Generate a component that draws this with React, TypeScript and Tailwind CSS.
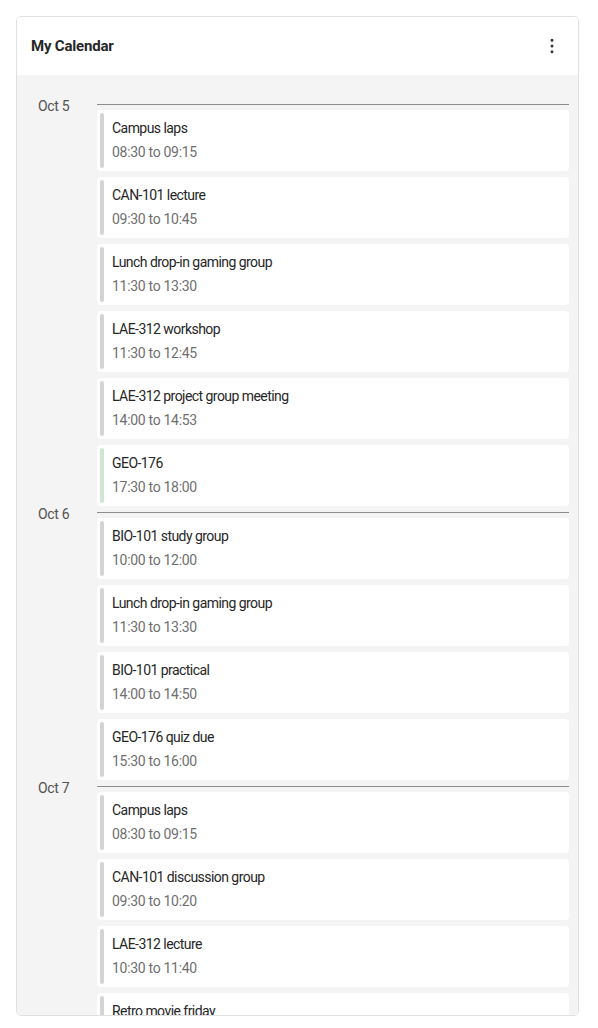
import React from 'react';
import { EllipsisVertical } from 'lucide-react';

interface CalendarEvent {
  title: string;
  time: string;
  accent?: string;
}

interface DayGroup {
  label: string;
  events: CalendarEvent[];
}

const days: DayGroup[] = [
  {
    label: 'Oct 5',
    events: [
      { title: 'Campus laps', time: '08:30 to 09:15' },
      { title: 'CAN-101 lecture', time: '09:30 to 10:45' },
      { title: 'Lunch drop-in gaming group', time: '11:30 to 13:30' },
      { title: 'LAE-312 workshop', time: '11:30 to 12:45' },
      { title: 'LAE-312 project group meeting', time: '14:00 to 14:53' },
      { title: 'GEO-176', time: '17:30 to 18:00', accent: 'green' },
    ],
  },
  {
    label: 'Oct 6',
    events: [
      { title: 'BIO-101 study group', time: '10:00 to 12:00' },
      { title: 'Lunch drop-in gaming group', time: '11:30 to 13:30' },
      { title: 'BIO-101 practical', time: '14:00 to 14:50' },
      { title: 'GEO-176 quiz due', time: '15:30 to 16:00' },
    ],
  },
  {
    label: 'Oct 7',
    events: [
      { title: 'Campus laps', time: '08:30 to 09:15' },
      { title: 'CAN-101 discussion group', time: '09:30 to 10:20' },
      { title: 'LAE-312 lecture', time: '10:30 to 11:40' },
      { title: 'Retro movie friday', time: '18:00 to 21:00' },
    ],
  },
];

const EventCard: React.FC<{ event: CalendarEvent }> = ({ event }) => (
  <div className="flex rounded-[4px] bg-white p-[3px] mb-[6px]">
    <div
      className={
        event.accent === 'green'
          ? 'w-[4px] rounded-[2px] bg-[#cfe6d4] shrink-0'
          : 'w-[4px] rounded-[2px] bg-[#d4d4d4] shrink-0'
      }
    />
    <div className="pl-[8px] pt-[5px] pb-[6px] flex flex-col gap-[4px]">
      <div className="text-[14px] leading-[20px] tracking-[-0.55px] text-[#262626]">{event.title}</div>
      <div className="text-[14px] leading-[20px] tracking-[-0.3px] text-[#6f6f6f]">{event.time}</div>
    </div>
  </div>
);

const App: React.FC = () => {
  return (
    <div className="pt-4 pl-4 bg-white" style={{ fontFamily: '"Roboto", "Liberation Sans", sans-serif' }}>
      <div className="w-[563px] h-[1000px] flex flex-col overflow-hidden rounded-[5px] border border-[#e0e0e0]">
        <div className="h-[58px] shrink-0 flex items-center justify-between bg-white pl-[14px] pr-[16px]">
          <h2 className="text-[15px] font-bold tracking-[-0.2px] text-[#262626]">My Calendar</h2>
          <EllipsisVertical size={20} className="text-[#333]" strokeWidth={1.6} />
        </div>
        <div className="flex-1 bg-[#f4f4f4] pt-[29px] pr-[9px]">
          {days.map((day) => (
            <div key={day.label} className="flex">
              <div className="w-[80px] shrink-0 pl-[21px]">
                <div className="-mt-[8px] text-[14px] leading-[20px] tracking-[-0.3px] text-[#525252]">{day.label}</div>
              </div>
              <div className="flex-1 border-t border-[#8d8d8d] pt-[5px]">
                {day.events.map((event, i) => (
                  <EventCard key={i} event={event} />
                ))}
              </div>
            </div>
          ))}
        </div>
      </div>
    </div>
  );
};

export default App;
